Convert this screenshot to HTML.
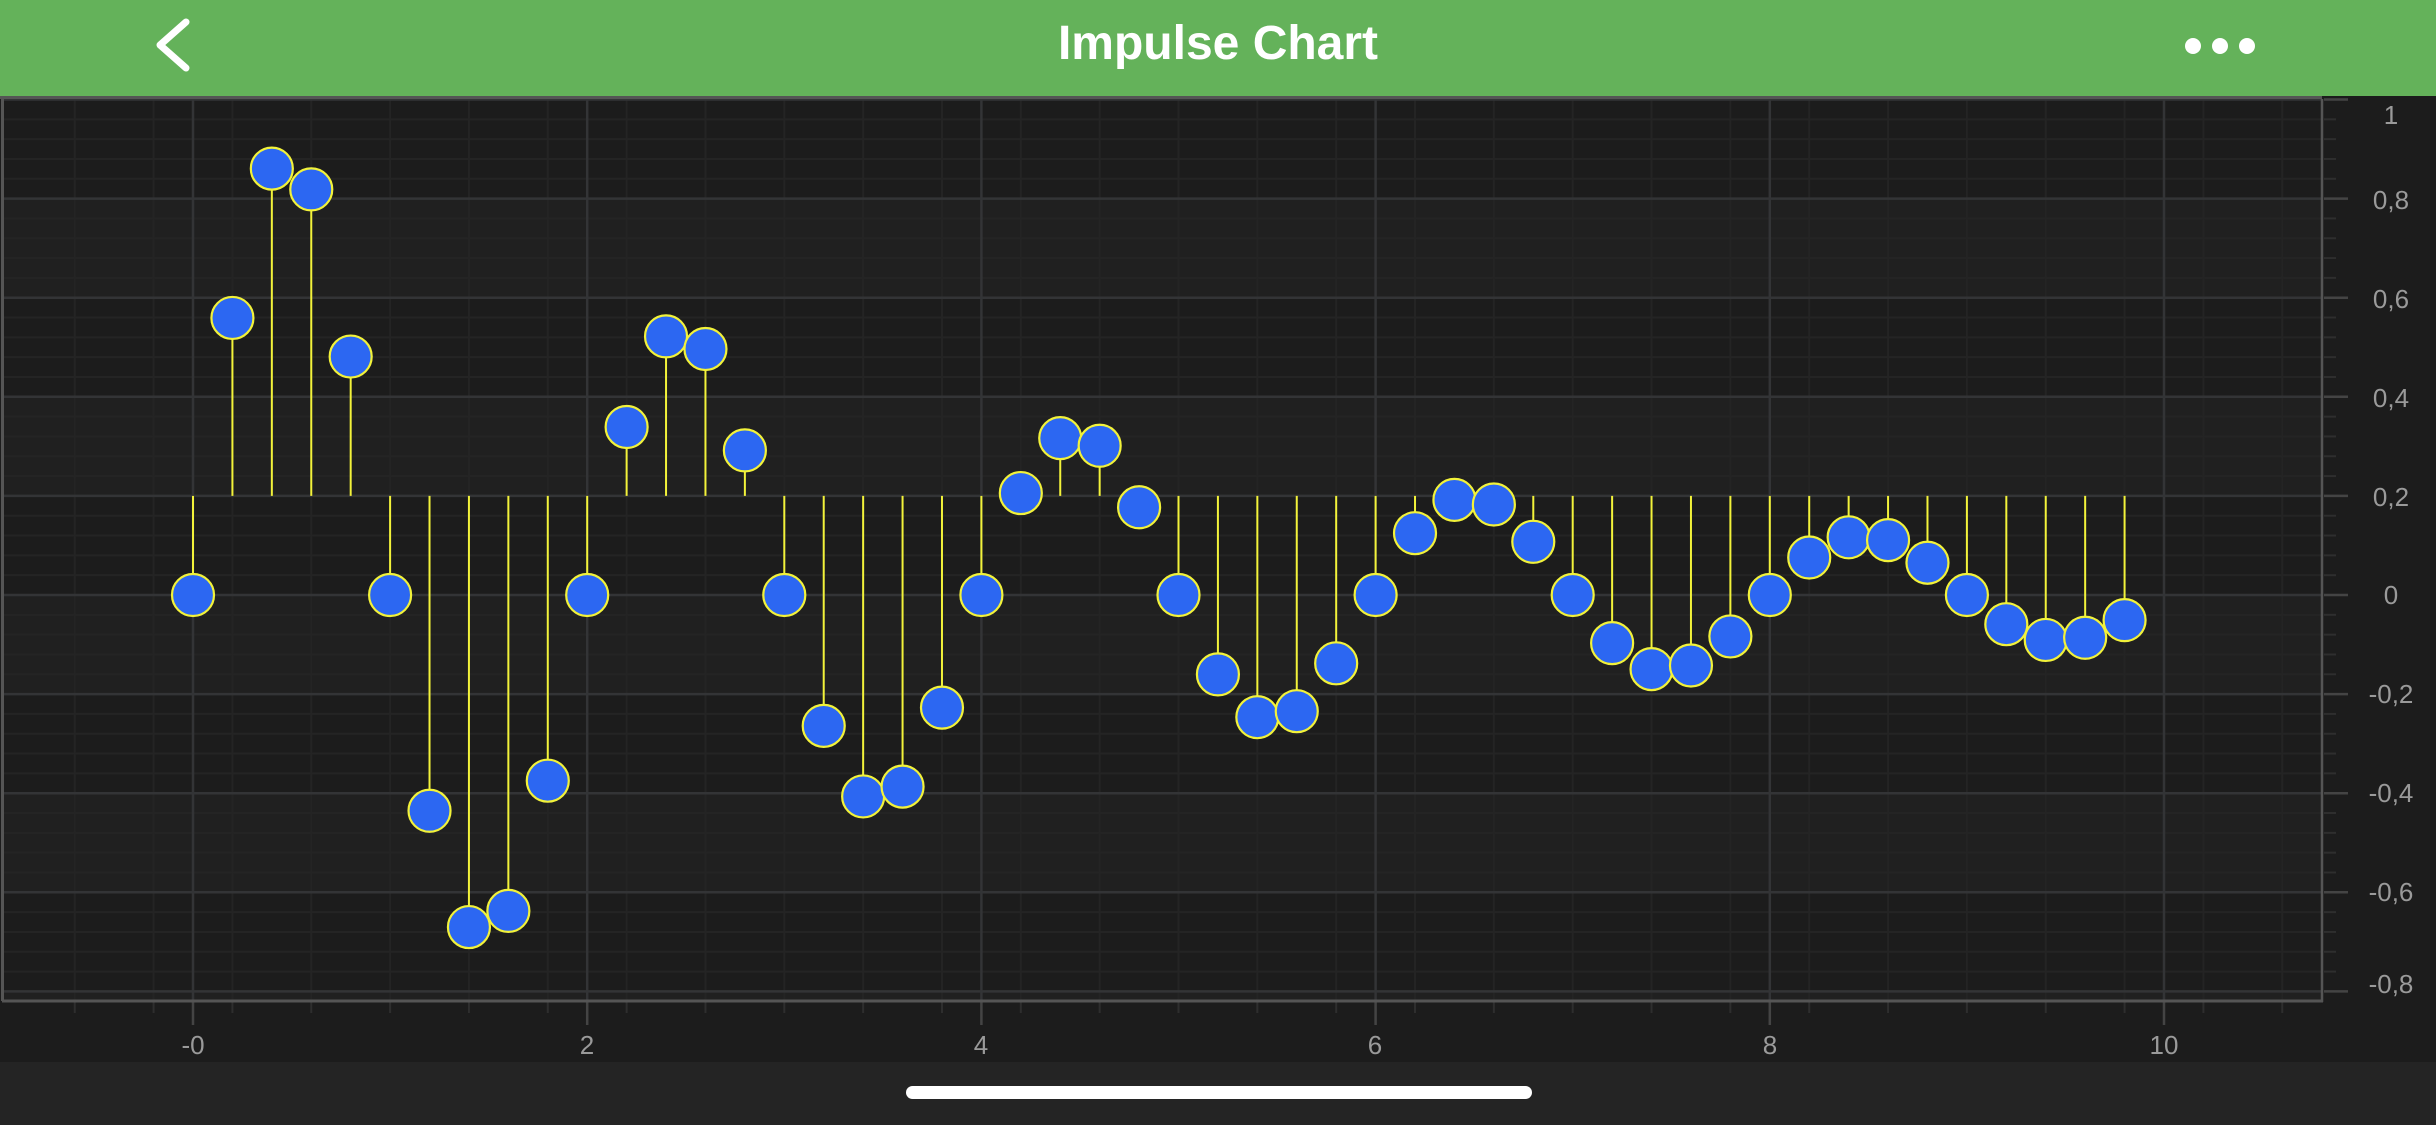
<!DOCTYPE html>
<html><head><meta charset="utf-8"><style>
html,body{margin:0;padding:0;background:#1c1c1c;width:2436px;height:1125px;overflow:hidden;font-family:"Liberation Sans",sans-serif}
</style></head><body>
<svg id="s" width="2436" height="1125" xmlns="http://www.w3.org/2000/svg" style="position:absolute;left:0;top:0">
<rect x="0" y="0" width="2436" height="1125" fill="#1c1c1c"/>
<rect x="0" y="1062" width="2436" height="63" fill="#242424"/>
<rect x="906" y="1086" width="626" height="13" rx="6.5" fill="#ffffff"/>
<g id="grid"></g>
<g id="data"></g>
<rect x="0" y="0" width="2436" height="96" fill="#64b25a"/>
<rect x="0" y="96" width="2322" height="3" fill="#555555"/>
<path d="M186 22 L160 45 L186 68" stroke="#fff" stroke-width="7" fill="none" stroke-linecap="round" stroke-linejoin="round"/>
<text x="1218" y="59" text-anchor="middle" fill="#fff" font-size="48" font-weight="bold" font-family="Liberation Sans, sans-serif">Impulse Chart</text>
<circle cx="2193" cy="46" r="8" fill="#fff"/><circle cx="2220" cy="46" r="8" fill="#fff"/><circle cx="2247" cy="46" r="8" fill="#fff"/>
<g fill="#9a9a9a" font-size="26" font-family="Liberation Sans, sans-serif" text-anchor="middle">
<text x="2391" y="124">1</text>
<text x="2391" y="209">0,8</text>
<text x="2391" y="308">0,6</text>
<text x="2391" y="407">0,4</text>
<text x="2391" y="506">0,2</text>
<text x="2391" y="604">0</text>
<text x="2391" y="703">-0,2</text>
<text x="2391" y="802">-0,4</text>
<text x="2391" y="901">-0,6</text>
<text x="2391" y="993">-0,8</text>
<text x="193" y="1054">-0</text>
<text x="587" y="1054">2</text>
<text x="981" y="1054">4</text>
<text x="1375" y="1054">6</text>
<text x="1770" y="1054">8</text>
<text x="2164" y="1054">10</text>
</g>
</svg>
<script>
function X(v){return 193+v*197.1}
function Y(v){return 595-v*495.5}
var g=document.getElementById('grid'),h='';
for(var i=0;i<9;i++){var y1=Y(1-0.2*i),y2=Y(0.8-0.2*i);h+='<rect x="3" y="'+y1+'" width="2319" height="'+(y2-y1)+'" fill="'+(i%2?'#202020':'#1c1c1c')+'"/>';}
h+='<rect x="3" y="'+Y(-0.8)+'" width="2319" height="'+(1001-Y(-0.8))+'" fill="#202020"/>';
for(var v=-0.8;v<=1.001;v+=0.04){var y=Y(v);if(y>1001)continue;h+='<line x1="3" x2="2322" y1="'+y+'" y2="'+y+'" stroke="#242424" stroke-width="2"/>';h+='<line x1="2324" x2="2336" y1="'+y+'" y2="'+y+'" stroke="#2e2e2e" stroke-width="2"/>';}
for(var v=-1;v<=10.8;v+=0.4){var x=X(v);if(x<3||x>2322)continue;h+='<line y1="99" y2="1001" x1="'+x+'" x2="'+x+'" stroke="#242424" stroke-width="2"/>';h+='<line y1="1001" y2="1013" x1="'+x+'" x2="'+x+'" stroke="#2e2e2e" stroke-width="2"/>';}
for(var k=0;k<10;k++){var y=Y(1-0.2*k);h+='<line x1="3" x2="2322" y1="'+y+'" y2="'+y+'" stroke="#333436" stroke-width="2.5"/>';h+='<line x1="2324" x2="2348" y1="'+y+'" y2="'+y+'" stroke="#444" stroke-width="2.5"/>';}
for(var k=0;k<=10;k+=2){var x=X(k);h+='<line y1="99" y2="1001" x1="'+x+'" x2="'+x+'" stroke="#333436" stroke-width="2.5"/>';h+='<line y1="1001" y2="1025" x1="'+x+'" x2="'+x+'" stroke="#444" stroke-width="2.5"/>';}
h+='<line x1="2.5" x2="2.5" y1="99" y2="1001" stroke="#555" stroke-width="3"/>';
h+='<line x1="2322" x2="2322" y1="99" y2="1002" stroke="#555" stroke-width="2.5"/>';
h+='<line x1="2" x2="2323" y1="1001" y2="1001" stroke="#555" stroke-width="3"/>';
g.innerHTML=h;
var d=document.getElementById('data'),L='',C='';
for(var i=0;i<50;i++){var xv=i*0.2,yv=Math.sin(Math.PI*xv)*Math.exp(-0.25*xv);if(Math.abs(yv)<1e-9)yv=0;var x=X(xv),y=Y(yv),b=Y(0.2);
L+='<line x1="'+x+'" x2="'+x+'" y1="'+b+'" y2="'+y+'" stroke="#f2f23a" stroke-width="2"/>';
C+='<circle cx="'+x+'" cy="'+y+'" r="21" fill="#2c67f2" stroke="#f2f23a" stroke-width="2.2"/>';}
d.innerHTML=L+C;
</script>
</body></html>
